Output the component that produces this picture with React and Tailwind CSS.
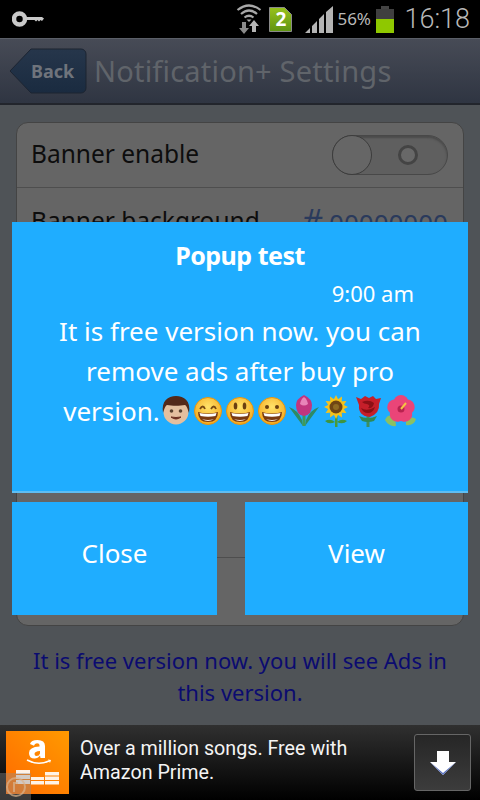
import React from "react";

const Key = () => (
  <svg width="32" height="20" viewBox="0 0 32 20">
    <circle cx="7.500" cy="10" r="5.500" fill="none" stroke="#c9c9c9" strokeWidth="4.500" />
    <path d="M13 8h17l2 1.500-2 2.500-1.500-1-1.500 1.500-1.500-1.500-1.500 1.500-1.500-1.500H13z" fill="#c9c9c9" />
  </svg>
);

const Wifi = () => (
  <svg width="26" height="32" viewBox="0 0 26 32">
    <g fill="none" stroke="#a8a8a8" strokeWidth="2.200">
      <path d="M1.500 7Q13-2 24.500 7" />
      <path d="M5 11Q13 4 21 11" />
      <path d="M8.500 14.500Q13 11 17.500 14.500" />
    </g>
    <path d="M13 19l-2.500-2.500h5z" fill="#a8a8a8" />
    <path d="M6 19h4v6h3l-5 6-5-6h3z" fill="#8a8a8a" />
    <path d="M18 17l5 6h-3v6h-4v-6h-3z" fill="#b5b5b5" />
  </svg>
);

const Sim = () => (
  <div className="relative w-[23px] h-[25px] flex items-center justify-center">
    <svg className="absolute inset-0" width="23" height="25" viewBox="0 0 23 25">
      <defs>
        <linearGradient id="sim" x1="0" y1="0" x2="0" y2="1">
          <stop offset="0" stopColor="#98c21c" />
          <stop offset="1" stopColor="#5f9412" />
        </linearGradient>
      </defs>
      <path d="M.5.500h15l7 7v17H.5z" fill="url(#sim)" stroke="#8a8a8a" />
    </svg>
    <span className="relative text-[19px] leading-none font-bold text-white">2</span>
  </div>
);

const Signal = () => (
  <svg width="28" height="27" viewBox="0 0 28 27">
    <path d="M0 27l5-5v5zM7 27v-7l5-5v12zM14 27V13l5-5v19zM21 27V6l7-6v27z" fill="#b4b4b4" />
  </svg>
);

const Battery = () => (
  <div className="flex flex-col items-center w-[18px] h-[27px]">
    <div className="w-[8px] h-[3px] bg-[#444]" />
    <div className="w-full h-[10px] bg-[#3f3f3f]" />
    <div className="w-full flex-1 bg-[#8fc800]" />
  </div>
);

const BackShape = () => (
  <svg className="absolute inset-0" width="78" height="46" viewBox="0 0 78 46">
    <defs>
      <linearGradient id="bk" x1="0" y1="0" x2="0" y2="1">
        <stop offset="0" stopColor="#26364b" />
        <stop offset="1" stopColor="#1a2b40" />
      </linearGradient>
    </defs>
    <path d="M1 23L22 1h50a5 5 0 0 1 5 5v34a5 5 0 0 1-5 5H22z" fill="url(#bk)" stroke="#1c2431" />
  </svg>
);

const Toggle = () => (
  <div className="relative w-[116px] h-[40px] rounded-full border border-[#484848] bg-[#5f5f5f] flex items-center justify-end pr-[29px] shadow-[inset_0_2px_2px_#4a4a4a]">
    <div className="w-[20px] h-[20px] rounded-full border-[3px] border-[#444] bg-[#686868]" />
    <div className="absolute left-[-1px] top-[-1px] w-[40px] h-[40px] rounded-full border border-[#3c3c3c] bg-[#666]" />
  </div>
);

const Boy = () => (
  <svg width="30" height="30" viewBox="0 0 30 30">
    <circle cx="15" cy="16" r="12.500" fill="#e4bf9f" />
    <path d="M2 17C0 5 7 0 15 0s15 5 13 17c-1-3-2-7-4-8-5 1-13 1-18 0-2 1-3 5-4 8z" fill="#53291a" />
    <circle cx="10.500" cy="15" r="1.800" fill="#58402f" />
    <circle cx="19.500" cy="15" r="1.800" fill="#58402f" />
    <path d="M10 21q5 4 10 0q-5 1-10 0z" fill="#6a2d20" stroke="#6a2d20" />
  </svg>
);

const Face = ({ kind }) => (
  <svg width="30" height="30" viewBox="0 0 30 30">
    <defs>
      <radialGradient id={"f" + kind} cx="0.5" cy="0.35" r="0.7">
        <stop offset="0" stopColor="#ffe36b" />
        <stop offset="1" stopColor="#f4a416" />
      </radialGradient>
    </defs>
    <circle cx="15" cy="15" r="13.500" fill={"url(#f" + kind + ")"} stroke="#e8940f" />
    {kind === "a" && (
      <path d="M7 13q3-5 5 0M18 13q3-5 5 0" fill="none" stroke="#7a4a12" strokeWidth="1.800" />
    )}
    {kind === "b" && (
      <g fill="#6b3f10">
        <ellipse cx="10.500" cy="10" rx="1.800" ry="3.500" />
        <ellipse cx="19.500" cy="10" rx="1.800" ry="3.500" />
      </g>
    )}
    {kind === "c" && (
      <g fill="#6b3f10">
        <circle cx="10" cy="11" r="2" />
        <circle cx="20" cy="11" r="2" />
      </g>
    )}
    <path d="M5 16q10 3 20 0q0 10-10 10T5 16z" fill="#7a3a12" />
    <path d="M6.500 17q8.500 2 17 0l-1 3q-7.500 1.500-15 0z" fill="#fff" />
    <path d="M9 23q6 2 12 0q-6 4-12 0z" fill="#fff" opacity=".9" />
  </svg>
);

const Tulip = () => (
  <svg width="30" height="32" viewBox="0 0 30 32">
    <path d="M14 31L0 12q9 3 13 13zM16 31l14-19q-9 3-13 13z" fill="#2f8a64" />
    <rect x="13.500" y="17" width="3" height="14" fill="#3f9a5a" />
    <path d="M7 10q0-6 8-10q8 4 8 10q0 10-8 11q-8-1-8-11z" fill="#c2357e" />
    <path d="M11 9q1-5 4-7q3 2 4 7q-4 3-8 0z" fill="#e884b8" />
  </svg>
);

const Sunflower = () => (
  <svg width="30" height="32" viewBox="0 0 30 32">
    <rect x="14" y="20" width="2.500" height="12" fill="#4a9a3a" />
    <path d="M14 27q-5-4-10-1q4 4 10 1zM16 27q5-4 10-1q-4 4-10 1z" fill="#3e9440" />
    {[0, 30, 60, 90, 120, 150, 180, 210, 240, 270, 300, 330].map((a) => (
      <path key={a} d="M15 0l3.500 7h-7z" fill="#f5c21b" transform={"rotate(" + a + " 15 12)"} />
    ))}
    <circle cx="15" cy="12" r="6.500" fill="#6f4514" />
    <circle cx="15" cy="12" r="3" fill="#8f6a22" />
  </svg>
);

const Rose = () => (
  <svg width="30" height="32" viewBox="0 0 30 32">
    <rect x="13.500" y="19" width="3" height="13" fill="#3c8f62" />
    <path d="M6 21q9 4 18 0l-3 5q-6 2-12 0z" fill="#2e8a57" />
    <path d="M3 2l5 2 4-3 4 2 4-2 3 3 5-1-2 6q1 9-9 13Q5 21 6 10z" fill="#c51f2a" />
    <path d="M9 7q7-3 12 1-1 6-6 5 3-3-1-4-3 0-5-2zM8 13q6 4 14-1-2 6-7 6-5 0-7-5z" fill="#8c1016" />
  </svg>
);

const Hibiscus = () => (
  <svg width="32" height="32" viewBox="0 0 32 32">
    <path d="M0 25q3-7 10-3l1 9q-7 1-11-6zM21 27q3-7 10-3-2 7-10 6z" fill="#8cc063" />
    {[0, 72, 144, 216, 288].map((a) => (
      <ellipse key={a} cx="16" cy="7.500" rx="7.500" ry="7.500" fill="#ea4578" transform={"rotate(" + a + " 16 14)"} />
    ))}
    <circle cx="16" cy="14" r="3.500" fill="#b8224f" />
    <path d="M16 14l5-6" stroke="#f6c343" strokeWidth="2" />
  </svg>
);

const AmazonIcon = () => (
  <div className="w-[63px] h-[63px] bg-[linear-gradient(45deg,#ff6a00,#ff9a00)] shrink-0">
    <svg width="63" height="63" viewBox="0 0 63 63">
      <path d="M24 13q1-4 7.500-4 7.500 0 7.500 6v12h-4.500l-.5-2.500q-2 3-5.500 3-5.500 0-5.500-5.500 0-6 10.500-6.500V14q0-1.800-2.500-1.800t-3 2.500zm10 7q-5.500.3-5.500 3 0 2 2 2 2.800 0 3.500-2.500z" fill="#fff" />
      <path d="M21 29q11 6 22 1" fill="none" stroke="#fff" strokeWidth="1.500" />
      <path d="M42 28.500l3 .5-1 3z" fill="#fff" />
      <path d="M10 39h14v4H10zM10 44h14v4H10zM10 49h14v4H10zM25 46h13v3H25zM25 50h13v3.500H25zM39 41h14v3.500H39zM39 45.500h14v3.500H39zM39 50h14v3.500H39z" fill="#fff" opacity=".9" />
    </svg>
  </div>
);

function Row({ children, className = "" }) {
  return <div className={"flex items-center justify-between pl-[14px] pr-[15px] border-b border-[#4e4e4e] " + className}>{children}</div>;
}

export default function App() {
  return (
    <div className="relative w-[480px] h-[800px] overflow-hidden flex flex-col bg-black font-['Noto_Sans',sans-serif]">
      {/* status bar */}
      <div className="h-[38px] shrink-0 bg-black flex items-center pl-[12px] pr-[10px]">
        <Key />
        <div className="ml-auto flex items-center">
          <Wifi />
          <div className="ml-[7px]"><Sim /></div>
          <div className="ml-[13px]"><Signal /></div>
          <span className="ml-[4px] w-[34px] text-[17px] text-[#b8b8b8]">56%</span>
          <div className="ml-[5px]"><Battery /></div>
          <span className="ml-[10px] text-[27px] leading-none font-light text-[#b8b8b8] font-['Roboto',sans-serif]">16:18</span>
        </div>
      </div>

      {/* action bar */}
      <div className="h-[67px] shrink-0 flex items-center pl-[9px] border-t border-b-2 border-t-[#5b5f68] border-b-[#22252c] bg-[linear-gradient(#474b56,#2f3542)]">
        <div className="relative w-[78px] h-[46px] shrink-0 flex items-center pl-[22px]">
          <BackShape />
          <span className="relative text-[18px] font-bold text-[#6f747c]">Back</span>
        </div>
        <span className="ml-[7px] text-[29px] tracking-[0.2px] whitespace-nowrap text-[#60646a]">Notification+ Settings</span>
      </div>

      {/* content */}
      <div className="flex-1 min-h-0 bg-[#4f5357] px-[16px] pt-[17px] flex flex-col">
        <div className="h-[504px] shrink-0 rounded-[12px] border border-[#444] bg-[#656565] flex flex-col overflow-hidden">
          <Row className="h-[65px] shrink-0">
            <span className="text-[24.500px] pb-[2px] text-[#0d0d0d]">Banner enable</span>
            <Toggle />
          </Row>
          <Row className="h-[67px] shrink-0">
            <span className="text-[24.500px] text-[#0d0d0d]">Banner background</span>
            <span className="text-[26px] text-[#2a3a5c]"><span className="text-[32px] italic">#</span> 00000000</span>
          </Row>
          <div className="h-[303px] shrink-0 border-b border-[#4e4e4e]" />
          <div className="flex-1" />
        </div>
        <p className="mt-[18px] text-center text-[22px] leading-[32px] text-[#0b0b70]">
          It is free version now. you will see Ads in
          <br />
          this version.
        </p>
      </div>

      {/* ad */}
      <div className="relative h-[75px] shrink-0 flex items-center pl-[6px] pr-[9px] bg-[linear-gradient(#303030,#000)]">
        <AmazonIcon />
        <p className="ml-[11px] pb-[4px] text-[19.700px] leading-[24px] text-[#f4f4f4] font-['Roboto',sans-serif]">
          Over a million songs. Free with
          <br />
          Amazon Prime.
        </p>
        <div className="ml-auto w-[57px] h-[57px] rounded-[3px] border border-[#666] bg-[linear-gradient(#262626,#3c3c3c)] flex items-center justify-center">
          <svg width="26" height="24" viewBox="0 0 26 24">
            <path d="M7 0h12v11h7L13 24 0 11h7z" fill="#fff" />
            <path d="M0 11l13 13 13-13-13 11z" fill="#5a72c0" />
          </svg>
        </div>
        <div className="absolute left-0 bottom-0 w-[31px] h-[27px] bg-[#8f8f8f]/40 flex items-center justify-center">
          <div className="w-[20px] h-[20px] rounded-full border-2 border-[#d9b48f]/70 flex items-center justify-center">
            <div className="w-[5px] h-[10px] border-l-2 border-t-2 border-[#d9b48f]/70" />
          </div>
        </div>
      </div>

      {/* popup: lies over the page */}
      <div className="absolute left-[12px] top-[222px] w-[456px] flex flex-col">
        <div className="h-[271px] bg-[#1fadff] border-b-2 border-[#5fbef2] text-white flex flex-col items-center">
          <div className="mt-[15px] text-[25px] leading-[36px] font-bold tracking-[-0.5px]">Popup test</div>
          <div className="w-full mt-[2px] pr-[54px] text-right text-[22px] leading-[36px]">9:00 am</div>
          <div className="text-[26px] leading-[40px] text-center">
            <div>It is free version now. you can</div>
            <div>remove ads after buy pro</div>
            <div className="flex items-center justify-center">
              version.
              <span className="flex items-center gap-[2px] ml-[1px]">
                <Boy /><Face kind="a" /><Face kind="b" /><Face kind="c" /><Tulip /><Sunflower /><Rose /><Hibiscus />
              </span>
            </div>
          </div>
        </div>
        <div className="mt-[9px] h-[113px] flex justify-between text-white text-[26px]">
          <div className="w-[205px] pb-[10px] bg-[#1fadff] flex items-center justify-center">Close</div>
          <div className="w-[223px] pb-[10px] bg-[#1fadff] flex items-center justify-center">View</div>
        </div>
      </div>
    </div>
  );
}
